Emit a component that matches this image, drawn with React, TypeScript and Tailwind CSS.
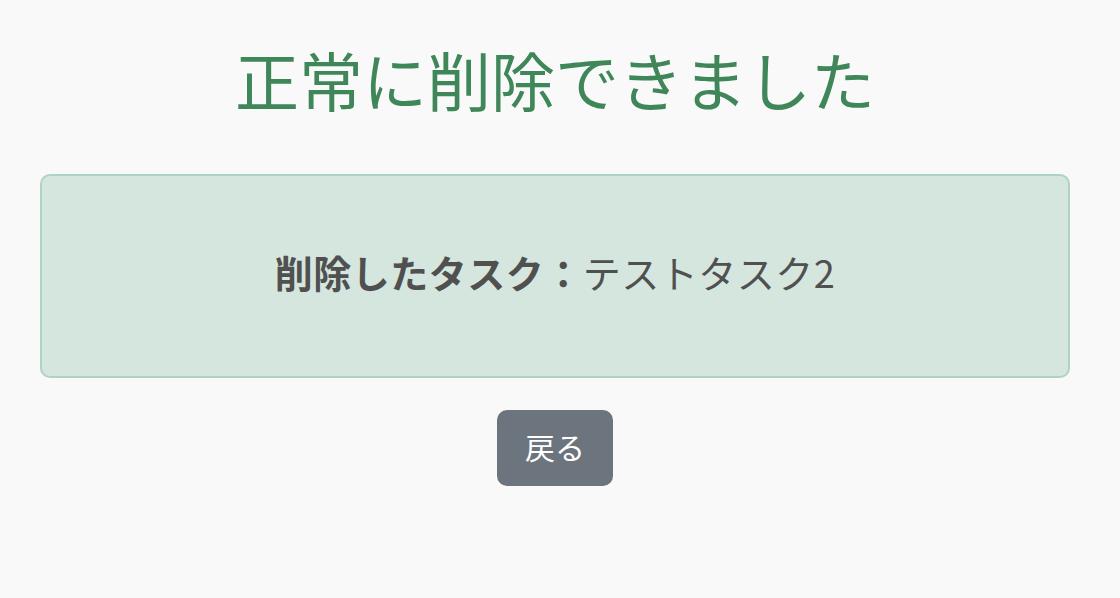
export default function App() {
  return (
    <div
      className="min-h-[598px] w-full bg-[#f9f9f9] flex flex-col items-center pl-[40px] pr-[50px] pt-[40px]"
      style={{ fontFamily: '"Noto Sans CJK JP", "Noto Sans", sans-serif' }}
    >
      <h1 className="text-[64px] leading-[77px] text-[#3f8659] font-normal">正常に削除できました</h1>
      <div className="mt-[57px] w-full h-[204px] rounded-[10px] border-2 border-[#aed3c2] bg-[#d5e6de] flex items-center justify-center pb-[8px]">
        <p className="text-[38px] leading-[50px] text-[#505050] tracking-[0.5px]">
          <span className="font-bold">削除したタスク：</span>
          <span>テストタスク2</span>
        </p>
      </div>
      <button className="mt-[32px] w-[116px] h-[76px] rounded-[10px] bg-[#6c747d] text-white text-[30px] flex items-center justify-center pb-[4px]">
        戻る
      </button>
    </div>
  );
}
